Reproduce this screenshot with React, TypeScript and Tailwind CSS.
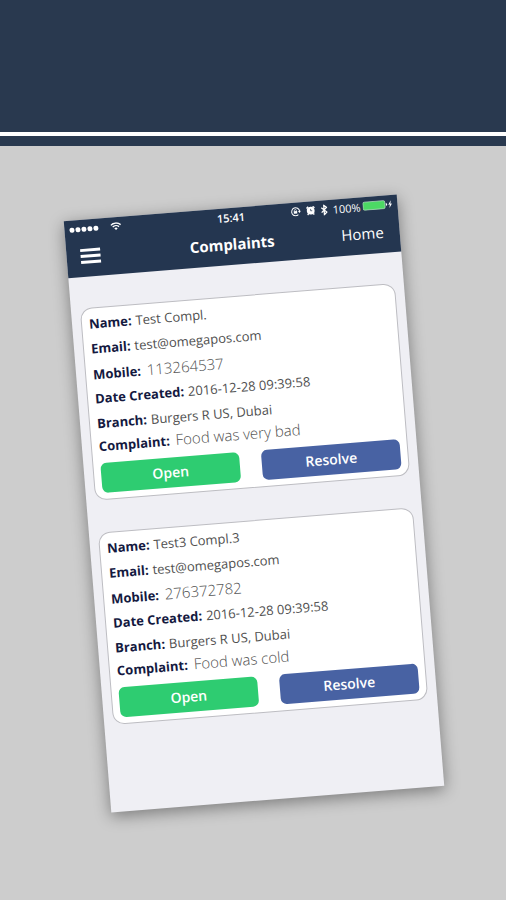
import React from 'react'
import clsx from 'clsx'

interface Complaint {
    id: number
    name: string
    email: string
    mobile: string
    created: string
    branch: string
    complaint: string
}

const complaints: Complaint[] = [
    {
        id: 1,
        name: 'Test Compl.',
        email: 'test@omegapos.com',
        mobile: '113264537',
        created: '2016-12-28 09:39:58',
        branch: 'Burgers R US, Dubai',
        complaint: 'Food was very bad',
    },
    {
        id: 2,
        name: 'Test3 Compl.3',
        email: 'test@omegapos.com',
        mobile: '276372782',
        created: '2016-12-28 09:39:58',
        branch: 'Burgers R US, Dubai',
        complaint: 'Food was cold',
    },
]

function StatusBar() {
    return (
        <div className="grid h-[18px] grid-cols-[1fr_auto_1fr] items-center px-[5px] text-[11px] leading-none">
            <div className="flex items-center gap-3">
                <div className="flex gap-px">
                    {[0, 1, 2, 3, 4].map((dot) => (
                        <span key={dot} className="size-[5px] rounded-full bg-white" />
                    ))}
                </div>
                <svg className="h-2 w-[11px]" viewBox="0 0 11 8" fill="none" stroke="currentColor" strokeWidth="1.4">
                    <path d="M.6 2.8a7 7 0 0 1 9.8 0M2.3 4.7a4.6 4.6 0 0 1 6.4 0" />
                    <path d="M5.5 7.8 3.8 6.1a2.4 2.4 0 0 1 3.4 0z" fill="currentColor" stroke="none" />
                </svg>
            </div>
            <span className="font-semibold">15:41</span>
            <div className="flex items-center justify-end gap-[5px]">
                {/* rotation lock */}
                <svg className="size-[10px]" viewBox="0 0 10 10" fill="none" stroke="currentColor">
                    <path d="M7.4 8.2A4 4 0 1 1 8.9 4.6" />
                    <path d="M7.2 4.4h3.2L8.8 6.6z" fill="currentColor" stroke="none" />
                    <rect x="3" y="4.4" width="3.4" height="2.6" fill="currentColor" stroke="none" />
                    <path d="M3.7 4.6v-.8a1 1 0 0 1 2 0v.8" strokeWidth=".7" />
                </svg>
                {/* alarm */}
                <svg className="size-[10px]" viewBox="0 0 10 10">
                    <circle cx="5" cy="5.2" r="3.9" fill="currentColor" />
                    <path d="M1 2.6 2.8 1M9 2.6 7.2 1M2.6 8.2l-.9 1.1M7.4 8.2l.9 1.1" stroke="currentColor" strokeWidth="1.4" />
                    <path d="M5 3.4v1.9h1.5" fill="none" stroke="#243650" strokeWidth=".7" />
                </svg>
                {/* bluetooth */}
                <svg className="h-[11px] w-[7px]" viewBox="0 0 7 11" fill="none" stroke="currentColor" strokeWidth="1.3">
                    <path d="m.8 3 5.2 4.8-2.6 2.4V.9L6 3.2.8 8" />
                </svg>
                <span>100%</span>
                <svg className="-ml-[3px] h-[10px] w-[30px]" viewBox="0 0 30 10">
                    <rect x=".5" y="1" width="22" height="8" rx="1.5" fill="#4cd964" stroke="#b9dfc5" strokeWidth=".7" />
                    <path d="M23.4 3.5v3q1.4-.4 1.4-1.5t-1.4-1.5" fill="#fff" />
                    <path d="M28.6 1.2 25.8 5.4h1.6l-.7 3.4 2.9-4.2H28z" fill="#fff" />
                </svg>
            </div>
        </div>
    )
}

function NavBar() {
    return (
        <div className="grid h-[39px] grid-cols-[1fr_auto_1fr] items-center pb-0.5 pl-[14px] pr-4 text-[15px]">
            <button type="button" aria-label="Menu" className="flex w-5 flex-col gap-[3px]">
                <span className="h-[3px] bg-white" />
                <span className="h-[3px] bg-white" />
                <span className="h-[3px] bg-white" />
            </button>
            <h1 className="font-bold">Complaints</h1>
            <a href="#home" className="justify-self-end">Home</a>
        </div>
    )
}

interface FieldProps {
    label: string
    value: string
    large?: boolean
    last?: boolean
}

function Field({ label, value, large, last }: FieldProps) {
    return (
        <div className={clsx('flex items-baseline', large ? 'gap-1.5' : 'gap-1', last ? 'h-5 leading-[18px]' : 'h-[25px] leading-[25px]')}>
            <dt className="text-[13px] font-bold text-[#14193f]">{label}:</dt>
            <dd className={clsx('text-[#505050]', large ? 'text-[15px] font-light' : 'text-[13px]')}>{value}</dd>
        </div>
    )
}

function ComplaintCard({ item }: { item: Complaint }) {
    return (
        <article className="rounded-xl border border-[#bdbdc2] bg-white px-[7px] pb-1.5 pt-[3px]">
            <dl className="whitespace-nowrap">
                <Field label="Name" value={item.name} />
                <Field label="Email" value={item.email} />
                <Field label="Mobile" value={item.mobile} large />
                <Field label="Date Created" value={item.created} />
                <Field label="Branch" value={item.branch} />
                <Field label="Complaint" value={item.complaint} large last />
            </dl>
            <div className="mt-[7px] grid grid-cols-2 gap-[22px] text-sm font-semibold text-white">
                <button type="button" className="h-[30px] rounded-md bg-[#2ecc71]">Open</button>
                <button type="button" className="h-[30px] rounded-md bg-[#4862a3]">Resolve</button>
            </div>
        </article>
    )
}

export default function App() {
    return (
        <div className="min-h-screen overflow-hidden bg-[#cdcdcd] font-['Open_Sans','Noto_Sans',sans-serif]">
            <header className="bg-[#29394f] pb-[10px] pt-[132px]">
                <div className="h-1 bg-white" />
            </header>

            <main className="pb-20 pl-[18px] pr-4 pt-[61px]">
                <div className="mx-auto min-h-[593px] max-w-[334px] -rotate-[4.6deg] bg-[#efeff4] shadow-[0_4px_16px_rgba(0,0,0,0.4)]">
                    <div className="bg-[#243650] text-white">
                        <StatusBar />
                        <NavBar />
                    </div>
                    <div className="flex flex-col gap-8 px-[9px] pt-[31px]">
                        {complaints.map((item) => (
                            <ComplaintCard key={item.id} item={item} />
                        ))}
                    </div>
                </div>
            </main>
        </div>
    )
}
